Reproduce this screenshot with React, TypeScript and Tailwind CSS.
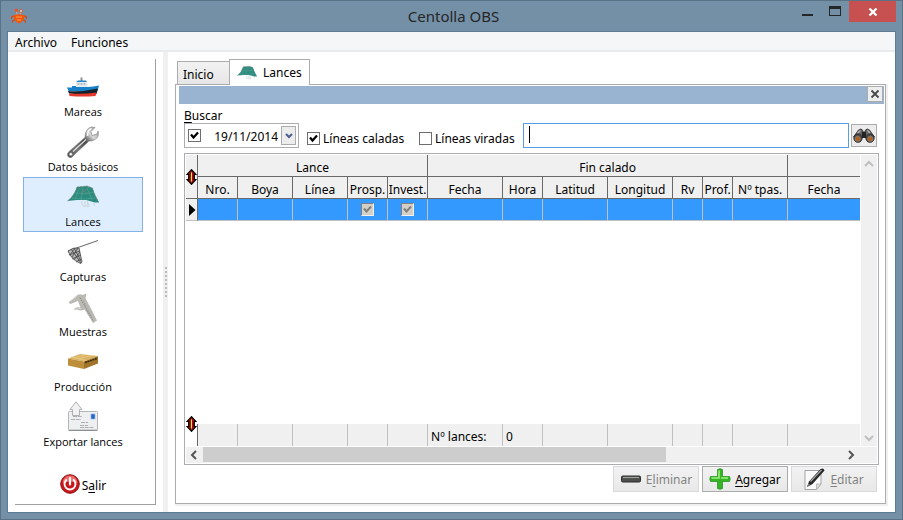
import type { ReactNode } from "react";

const nav: { label: string; icon: ReactNode }[] = [
  { label: "Mareas", icon: <ShipIcon /> },
  { label: "Datos básicos", icon: <WrenchIcon /> },
  { label: "Lances", icon: <NetIcon className="h-8 w-8" /> },
  { label: "Capturas", icon: <HandNetIcon /> },
  { label: "Muestras", icon: <CaliperIcon /> },
  { label: "Producción", icon: <CrateIcon /> },
  { label: "Exportar lances", icon: <ExportIcon /> },
];

const columns = [
  { label: "Nro.", width: "w-[40px]" },
  { label: "Boya", width: "w-[55px]" },
  { label: "Línea", width: "w-[55px]" },
  { label: "Prosp.", width: "w-[40px]" },
  { label: "Invest.", width: "w-[40px]" },
  { label: "Fecha", width: "w-[75px]" },
  { label: "Hora", width: "w-[40px]" },
  { label: "Latitud", width: "w-[65px]" },
  { label: "Longitud", width: "w-[65px]" },
  { label: "Rv", width: "w-[30px]" },
  { label: "Prof.", width: "w-[30px]" },
  { label: "Nº tpas.", width: "w-[55px]" },
  { label: "Fecha", width: "w-auto" },
];

function CrabIcon() {
  return (
    <svg viewBox="0 0 16 16" className="h-4 w-4">
      <path d="M4 8 .8 8.500.5 11M12 8l3.200.5.3 2.500M4.500 11.500l-3 1.500.5 1.500M11.500 11.500l3 1.500-.5 1.500" stroke="#d9481c" strokeWidth="1.300" fill="none" />
      <path d="M6.500 7 5.500 3.500M9 7l1-3" stroke="#c9a79a" strokeWidth="1.300" />
      <circle cx="5.300" cy="2.200" r="1.700" fill="#e2572c" />
      <circle cx="10" cy="3" r="1.500" fill="#e8d6cc" stroke="#c9481c" strokeWidth=".7" />
      <path d="M2.500 7.500Q8 5 13.500 7.500 13.500 13 8 15.500 2.500 13 2.500 7.500Z" fill="#f0560e" />
      <path d="M5 9h6M6 12h4" stroke="#ffa045" strokeWidth="1" />
    </svg>
  );
}

function ShipIcon() {
  return (
    <svg viewBox="0 0 32 32" className="h-8 w-8">
      <path d="M13.500 6.500h2v4h-2z" fill="#8b9399" />
      <path d="M9 11 11 9.500h8l1 1.500z" fill="#2186c9" />
      <path d="M9 11h11.500v5H9z" fill="#e6eaec" />
      <path d="M10.500 12h2v2h-2zM13.500 12h2v2h-2zM16.500 12h2v2h-2z" fill="#b3c0c8" />
      <path d="M0 16.500h5V15h4v1h12q5-.5 11-1.500L30.500 20H1.500z" fill="#1680c8" />
      <path d="M1 20q15 1 30-2.500l-1.500 5.500Q16 24 2 22.500z" fill="#14212b" />
      <path d="M2 22.500q15 1 27.700-1L28.500 25q-13 1-26 0z" fill="#e2392c" />
    </svg>
  );
}

function WrenchIcon() {
  return (
    <svg viewBox="0 0 32 32" className="h-8 w-8">
      <defs>
        <linearGradient id="steel" x1="0" y1="1" x2="1" y2="0">
          <stop offset="0" stopColor="#4c4c4c" />
          <stop offset=".3" stopColor="#777" />
          <stop offset=".55" stopColor="#454545" />
          <stop offset=".75" stopColor="#d9d9d9" />
          <stop offset="1" stopColor="#8d8d8d" />
        </linearGradient>
      </defs>
      <path d="M1.500 31q-2.500-2.500.5-5.500L18 11.500q0-8.500 6-10.500l4 .5-4 4 1 4 5-1.500 1-3q1.500 6-3 8.500-3 2-6 1.500L7.500 28.500q-3.500 5-6 2.500Z" fill="url(#steel)" stroke="#7c7c7c" strokeWidth=".6" />
      <path d="M6 25.500 19 13.500" stroke="#dedede" strokeWidth="1.200" />
      <circle cx="3.800" cy="28.200" r="1.600" fill="#fff" stroke="#555" strokeWidth=".5" />
      <path d="M20.500 10q0-6 4-7.500" stroke="#f7f7f7" strokeWidth="1.500" fill="none" />
    </svg>
  );
}

function NetIcon({ className }: { className: string }) {
  return (
    <svg viewBox="0 0 32 32" className={className}>
      <path d="M10 6 20 5l5.500 2q2 7 6.500 14.500h-4l-9-2.500H10L.5 20Q7 15 10 6z" fill="#2b8c7e" />
      <path d="M12 8 8 18M16 7l-2 12M20 7l5 12M8 12q10 2 19-1M5 17q12 2 23 0" stroke="#58a596" strokeWidth=".6" fill="none" />
      <path d="M10 6 20 5l5.500 2q2 7 6.500 14.500M10 6Q7 15 .5 20M12 7l9 6M22 6l-9 7" stroke="#7e8275" strokeWidth=".7" fill="none" strokeDasharray="2 1" />
      <path d="M15 20v4q2.500 3 6 0l-1-4M21 22q3 4-1 4M26 21l2 4M18 20v5" stroke="#ccd6d8" strokeWidth="1" fill="none" />
    </svg>
  );
}

function HandNetIcon() {
  return (
    <svg viewBox="0 0 32 32" className="h-8 w-8">
      <path d="M1 15 31 4.500" stroke="#666" strokeWidth="1" />
      <path d="M1 15q5-4 11-3l3 14q-1 2.500-2.500 1Q4 23 1 15Z" fill="#b5b5b5" />
      <path d="M1 15q5-4 11-3l3 14q-1 2.500-2.500 1Q4 23 1 15ZM4 13l10 14M7 12l7 13M2 19l11-4M5 23l9-4M9 26l5-3M11 12 5 21M8 12l-5 7M13 16l-6 8" stroke="#454545" strokeWidth=".8" fill="none" />
    </svg>
  );
}

function CaliperIcon() {
  return (
    <svg viewBox="0 0 32 32" className="h-8 w-8">
      <path d="m1.500 11.500 7-6q4-3.500 7-1.500l4-1.500-1 5 5 9 6.500 13-4 2.500-8.500-13.500-3.500 1-7.500-1q2-3 7-2l-2.500-6.500-7.500 3z" fill="#bab9b4" />
      <path d="m13 6.500 13.500 24" stroke="#85847e" strokeWidth="1" strokeDasharray="1.500 1" />
      <path d="M16 10 25.500 27.500" stroke="#a3a29c" strokeWidth="1.500" strokeDasharray="1 1.500" />
      <path d="m2.500 10.500 7-5M7 18.500l7-1" stroke="#dddcd7" strokeWidth="1" />
    </svg>
  );
}

function CrateIcon() {
  return (
    <svg viewBox="0 0 32 32" className="h-8 w-8">
      <path d="m1 12.500 12-4.500 18 2-14 5.500z" fill="#d9b265" />
      <path d="m1 12.500 16 3v7.500L1 19.500z" fill="#bd8f3a" />
      <path d="M17 15.500 31 10v7.500L17 23z" fill="#a0752a" />
      <path d="m7 12 11-3M12 13l12-3.500M4 11l15 3.500" stroke="#ebcb88" strokeWidth=".8" />
      <path d="m18 16.500 12-4" stroke="#3c2a0c" strokeWidth="1.600" strokeDasharray="2 .6" />
    </svg>
  );
}

function ExportIcon() {
  return (
    <svg viewBox="0 0 32 32" className="h-8 w-8">
      <rect x="1.500" y="10.500" width="29" height="18.500" rx=".8" fill="#eeeff0" stroke="#b3b5b7" />
      <path d="M1.500 29.500h29" stroke="#8d9092" />
      <path d="M6 15.500h9M4 18.500h10M14 21.500h7M13 24.500h8M13 26.500h14" stroke="#a4a8ac" strokeWidth=".9" strokeDasharray="4 .7" />
      <rect x="24" y="13" width="4" height="5" fill="#1f63c8" stroke="#91b7e5" strokeWidth=".7" />
      <path d="m9 .8 6 7.700h-2.500v6h-7v-6H3z" fill="#f1f1f1" stroke="#a6a9ab" strokeWidth=".9" />
    </svg>
  );
}

function PowerIcon() {
  return (
    <svg viewBox="0 0 20 20" className="h-5 w-5">
      <circle cx="10" cy="10" r="9.300" fill="#c9161b" stroke="#8e1518" />
      <path d="M2.500 9a7.500 7.500 0 0 1 15 0q-7-3-15 0Z" fill="#ee6b69" />
      <path d="M6.300 6a5.500 5.500 0 1 0 7.400 0" stroke="#fff" strokeWidth="1.900" fill="none" strokeLinecap="round" />
      <path d="M10 4v6.500" stroke="#fff" strokeWidth="2.200" strokeLinecap="round" />
    </svg>
  );
}

function BinocularsIcon() {
  return (
    <svg viewBox="0 0 22 16" className="h-4 w-[22px]">
      <path d="M5.500 2q2.500-2 4 0l.5 2h2l.5-2q1.500-2 4 0L21.500 9H.5z" fill="#666" stroke="#2a2a2a" strokeWidth=".8" />
      <path d="M9 4h4v6H9z" fill="#232323" />
      <path d="M4.500 5l3-2.500M17 5l-2.500-2.500" stroke="#bbb" strokeWidth="1.200" />
      <circle cx="5" cy="10.200" r="4.200" fill="#4b4b4b" stroke="#222" strokeWidth=".7" />
      <circle cx="17" cy="10.200" r="4.200" fill="#4b4b4b" stroke="#222" strokeWidth=".7" />
      <circle cx="4.700" cy="10.800" r="2.600" fill="#b0601f" stroke="#8f8f8f" strokeWidth=".6" />
      <circle cx="17.300" cy="10.800" r="2.600" fill="#b0601f" stroke="#8f8f8f" strokeWidth=".6" />
    </svg>
  );
}

function RangeArrowIcon() {
  return (
    <svg viewBox="0 0 11 16" className="h-4 w-[11px]">
      <path d="M5.500.7 10 5.500H8.300v5H10l-4.500 4.800L1 10.500h1.700v-5H1z" fill="#9c0f12" stroke="#000" strokeWidth="1.200" />
      <path d="M5.500 3.500v9" stroke="#ffe14d" strokeWidth="1" />
    </svg>
  );
}

function MinusIcon() {
  return (
    <svg viewBox="0 0 22 22" className="h-[22px] w-[22px]">
      <rect x="1.500" y="8" width="19" height="6" rx="1.200" fill="#4c4f4c" stroke="#2c2c2c" />
      <path d="M3 9.500h16" stroke="#9ca09c" strokeWidth="1.200" />
    </svg>
  );
}

function PlusIcon() {
  return (
    <svg viewBox="0 0 22 22" className="h-[22px] w-[22px]">
      <path d="M8.500 1.500q2.500-1.500 5 0v7h7q1.500 2.500 0 5h-7v7q-2.500 1.500-5 0v-7h-7q-1.500-2.500 0-5h7z" fill="#35b525" stroke="#1e8c18" strokeWidth=".7" />
      <path d="M10 2.500v7.500H2.500M12 10h7" stroke="#9df07c" strokeWidth="1.600" fill="none" />
    </svg>
  );
}

function EditIcon() {
  return (
    <svg viewBox="0 0 22 22" className="h-[22px] w-[22px]">
      <path d="M1 2.500h16V16l-4.500 5.500H1z" fill="#fafafa" stroke="#9b9b9b" strokeWidth=".9" />
      <path d="M12.500 21.500V16H17z" fill="#ddd" stroke="#aaa" strokeWidth=".7" />
      <path d="m3 19 2-5.500L16.500 1q3-1.500 4 1.500L8.500 16z" fill="#262626" />
      <path d="m6.500 13.500 11-11.500" stroke="#a2a2a2" strokeWidth="1.300" />
      <path d="m3 19 1.500-4 2 2z" fill="#777" />
    </svg>
  );
}

function Chevron({ d, color }: { d: string; color: string }) {
  return (
    <svg viewBox="0 0 10 10" className="h-[10px] w-[10px]">
      <path d={d} stroke={color} strokeWidth="2" fill="none" />
    </svg>
  );
}

const tick =
  "grid h-[13px] w-[13px] shrink-0 appearance-none place-items-center border border-[#6e6e6e] bg-white text-black";

function Tick({ label, checked }: { label?: string; checked?: boolean }) {
  return (
    <span className="relative grid shrink-0 place-items-center">
      <input type="checkbox" aria-label={label} defaultChecked={checked} className={tick + " peer"} />
      <svg viewBox="0 0 13 13" className="pointer-events-none absolute h-[13px] w-[13px] opacity-0 peer-checked:opacity-100">
        <path d="M3 5.500 5.500 8.500 10 3.500" stroke="#000" strokeWidth="2.200" fill="none" />
      </svg>
    </span>
  );
}

function GridTick({ label }: { label: string }) {
  return (
    <span className="relative grid place-items-center">
      <input
        type="checkbox"
        aria-label={label}
        defaultChecked
        disabled
        className="h-[13px] w-[13px] appearance-none border border-[#f0f0f0] border-t-[#808080] border-l-[#808080] bg-[#d4d0c8]"
      />
      <svg viewBox="0 0 13 13" className="pointer-events-none absolute h-[13px] w-[13px]">
        <path d="M3 5.500 5.500 8.500 10 3.500" stroke="#808080" strokeWidth="2" fill="none" />
      </svg>
    </span>
  );
}

const headCell = "h-[22px] overflow-hidden border-r border-b border-[#696969] bg-[#f0f0f0] p-0 pt-1 text-center leading-4 font-normal last:border-r-0";
const actionButton =
  "flex h-[26px] w-[86px] items-center justify-center gap-1 border bg-gradient-to-b from-[#f2f2f2] to-[#e8e8e8]";

export default function App() {
  return (
    <div className="flex h-screen flex-col border border-[#5b7186] bg-[#7490a7] px-1.5 pb-1.5 font-['Noto_Sans','Open_Sans',sans-serif] text-[12px] leading-4 text-black">
      <header className="grid h-[30px] shrink-0 grid-cols-[1fr_auto_1fr] items-center pl-1">
        <CrabIcon />
        <h1 className="text-[15px] leading-6 text-[#262626]">Centolla OBS</h1>
        <div className="flex h-full items-start justify-end">
          <button aria-label="Minimizar" className="flex h-5 w-[27px] items-start pt-[13px]">
            <span className="h-0.5 w-[11px] bg-[#262626]" />
          </button>
          <button aria-label="Maximizar" className="flex h-5 w-5 pt-[5px]">
            <span className="h-[10px] w-3 border border-t-[3px] border-[#262626]" />
          </button>
          <button aria-label="Cerrar" className="grid h-[21px] w-[47px] place-items-center bg-[#c75050]">
            <svg viewBox="0 0 10 8" className="h-2 w-[10px]">
              <path d="m1.500.5 7 7M8.500.5l-7 7" stroke="#fff" strokeWidth="2.200" />
            </svg>
          </button>
        </div>
      </header>

      <div className="flex min-h-0 flex-1 flex-col border border-[#5c7b95] bg-white">
        <nav className="flex h-5 shrink-0 items-center gap-3.5 border-b-2 border-[#e9eaeb] bg-[#f5f6f7] px-[7px]">
          <button className="pt-1">Archivo</button>
          <button className="pt-1">Funciones</button>
        </nav>

        <div className="flex min-h-0 flex-1">
          <aside className="m-[7px] flex w-[141px] shrink-0 flex-col items-center border-r border-b border-[#a0a0a0] pt-2 pr-1">
            {nav.map(({ label, icon }) => (
              <button
                key={label}
                aria-current={label === "Lances" ? "page" : undefined}
                className={
                  label === "Lances"
                    ? "flex h-[55px] w-[120px] shrink-0 flex-col items-center border border-[#84b2e8] bg-[#deeeff] pt-[3px] font-['Open_Sans',sans-serif] text-[11px]"
                    : "flex h-[55px] w-[120px] shrink-0 flex-col items-center border border-transparent pt-[3px] font-['Open_Sans',sans-serif] text-[11px]"
                }
              >
                {icon}
                <span className="pt-px">{label}</span>
              </button>
            ))}
            <button className="mt-[22px] flex items-center gap-0.5">
              <PowerIcon />
              <span className="pt-1">
                S<u className="underline-offset-2">a</u>lir
              </span>
            </button>
          </aside>

          <div className="grid w-[5px] shrink-0 place-items-center bg-[#f0f0f0]">
            <div className="flex flex-col gap-0.5">
              {[0, 1, 2, 3, 4, 5, 6, 7].map((dot) => (
                <span key={dot} className="h-0.5 w-0.5 bg-[#bcbcbc]" />
              ))}
            </div>
          </div>

          <main className="flex min-w-0 flex-1 flex-col pt-[7px] pr-[9px] pb-2 pl-[7px]">
            <div role="tablist" className="z-10 -mb-px flex shrink-0 items-end pl-0.5">
              <button role="tab" className="mt-0.5 h-6 w-[52px] border border-r-0 border-[#acacac] bg-gradient-to-b from-[#f2f2f2] to-[#e6e6e6] pt-[3px] pl-[5px] text-left">
                Inicio
              </button>
              <button role="tab" aria-selected="true" className="flex h-[26px] w-[81px] items-center gap-1.5 border border-b-0 border-[#acacac] bg-white pl-[7px]">
                <NetIcon className="h-5 w-5" />
                <span className="pt-px">Lances</span>
              </button>
            </div>

            <section className="flex min-h-0 flex-1 flex-col border border-[#acacac] shadow-[1px_1px_0_1px_#f0f0f0]">
              <div className="mt-px mr-px ml-[3px] flex h-[18px] shrink-0 justify-end bg-[#99b4d1] pr-px">
                <button aria-label="Cerrar panel" className="grid h-4 w-4 place-items-center border border-[#acacac] bg-[#eee]">
                  <svg viewBox="0 0 10 10" className="h-[10px] w-[10px]">
                    <path d="m1.500 1.500 7 7M8.500 1.500l-7 7" stroke="#484848" strokeWidth="1.800" />
                  </svg>
                </button>
              </div>

              <div className="flex min-h-0 flex-1 flex-col pr-1.5 pb-[11px] pl-2">
                <label htmlFor="buscar" className="-mb-px shrink-0 pt-1">
                  <u className="underline-offset-2">B</u>uscar
                </label>

                <div className="mr-0.5 flex h-[25px] shrink-0 items-start">
                  <div className="flex h-[25px] w-[115px] items-center border border-[#abadb3] bg-white pr-0.5 pl-[3px]">
                    <Tick label="Filtrar por fecha" checked />
                    <input aria-label="Fecha" defaultValue="19/11/2014" className="w-0 flex-1 pt-0.5 pr-[3px] text-right outline-none" />
                    <button aria-label="Abrir calendario" className="grid h-[19px] w-[15px] place-items-center border border-[#acacac] bg-[#ececec]">
                      <Chevron d="M2 3l3 3 3-3" color="#4d5f8f" />
                    </button>
                  </div>
                  <label className="mt-1.5 ml-2 flex w-[100px] items-center gap-[3px]">
                    <Tick checked />
                    <span className="pt-0.5">Líneas caladas</span>
                  </label>
                  <label className="mt-1.5 ml-3 flex w-[98px] items-center gap-[3px]">
                    <Tick />
                    <span className="pt-0.5">Líneas viradas</span>
                  </label>
                  <div className="relative ml-1.5 h-[25px] min-w-0 flex-1">
                    <input id="buscar" className="h-full w-full border border-[#569de5] px-1.5 outline-none" />
                    <span className="absolute top-[3px] left-1.5 h-[17px] w-px bg-black" />
                  </div>
                  <button aria-label="Buscar" className="mt-px ml-0.5 grid h-[23px] w-[26px] place-items-center border border-[#acacac] bg-[#ececec]">
                    <BinocularsIcon />
                  </button>
                </div>

                <div className="mt-[5px] flex min-h-0 flex-1 flex-col border border-[#abadb3] p-px">
                  <div className="flex min-h-0 flex-1 pb-px">
                    <div className="relative min-w-0 flex-1">
                      <table className="h-full w-full table-fixed border-separate border-spacing-0 whitespace-nowrap">
                        <colgroup>
                          <col className="w-[12px]" />
                          {columns.map((c, i) => (
                            <col key={i} className={c.width} />
                          ))}
                        </colgroup>
                        <thead>
                          <tr>
                            <td rowSpan={2} className="border-r border-b border-[#696969] bg-[#f0f0f0] p-0">
                              <RangeArrowIcon />
                            </td>
                            <th colSpan={5} className={headCell}>Lance</th>
                            <th colSpan={7} className={headCell}>Fin calado</th>
                            <th className={headCell} />
                          </tr>
                          <tr>
                            {columns.map((c, i) => (
                              <th key={i} className={headCell}>
                                {c.label}
                              </th>
                            ))}
                          </tr>
                        </thead>
                        <tbody>
                          <tr>
                            <td className="h-[22px] border-r border-b border-r-[#696969] border-b-[#c0c0c0] bg-[#f0f0f0] p-0">
                              <svg viewBox="0 0 11 12" className="h-3 w-[11px]">
                                <path d="M3 0v12l6.500-6z" fill="#000" />
                              </svg>
                            </td>
                            {columns.map((c, i) => (
                              <td key={i} className="h-[22px] border-r border-b border-[#c0c0c0] bg-[#3399ff] p-0 last:border-r-0">
                                {(c.label === "Prosp." || c.label === "Invest.") && <GridTick label={c.label} />}
                              </td>
                            ))}
                          </tr>
                          <tr>
                            <td colSpan={14} className="p-0" />
                          </tr>
                        </tbody>
                        <tfoot>
                          <tr>
                            <td className="h-[22px] border-r border-[#696969] p-0" />
                            {columns.map((c, i) => (
                              <td key={i} className="h-[22px] border-r border-[#c0c0c0] bg-[#f0f0f0] p-0 pt-1 pl-[3px] leading-4 last:border-r-0">
                                {i === 5 ? "Nº lances:" : i === 6 ? "0" : ""}
                              </td>
                            ))}
                          </tr>
                        </tfoot>
                      </table>
                      <div className="absolute bottom-[14px] left-0">
                        <RangeArrowIcon />
                      </div>
                    </div>
                    <div className="ml-px flex w-4 shrink-0 flex-col items-center justify-between bg-[#f0f0f0] pt-1 pb-[3px]">
                      <Chevron d="M1 7l4-4 4 4" color="#bfbfbf" />
                      <Chevron d="M1 3l4 4 4-4" color="#bfbfbf" />
                    </div>
                  </div>
                  <div className="flex h-4 shrink-0 items-center bg-[#f0f0f0] pr-[21px] pl-[3px]">
                    <Chevron d="M7 1 3 5l4 4" color="#555" />
                    <div className="ml-1 flex h-full flex-1">
                      <div className="h-[15px] w-[72%] bg-[#cdcdcd]" />
                    </div>
                    <Chevron d="M3 1l4 4-4 4" color="#555" />
                  </div>
                </div>

                <div className="mt-px mr-0.5 flex shrink-0 justify-end gap-[3px]">
                  <button disabled className={actionButton + " border-[#d9d9d9] text-[#838383]"}>
                    <MinusIcon />
                    <span className="pt-0.5">E<u className="underline-offset-2">l</u>iminar</span>
                  </button>
                  <button className={actionButton + " border-[#acacac]"}>
                    <PlusIcon />
                    <span className="pt-0.5"><u className="underline-offset-2">A</u>gregar</span>
                  </button>
                  <button disabled className={actionButton + " border-[#d9d9d9] text-[#838383]"}>
                    <EditIcon />
                    <span className="pt-0.5"><u className="underline-offset-2">E</u>ditar</span>
                  </button>
                </div>
              </div>
            </section>
          </main>
        </div>
      </div>
    </div>
  );
}
